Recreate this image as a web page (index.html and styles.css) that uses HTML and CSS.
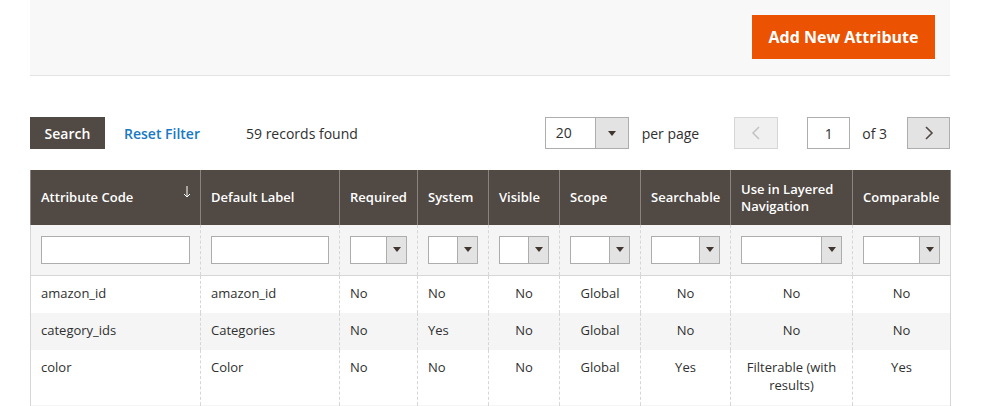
FILE: index.html
```html
<!DOCTYPE html>
<html lang="en">
<head>
    <meta charset="UTF-8">
    <title>Product Attributes</title>
    <link rel="stylesheet" href="styles.css">
</head>
<body>
    <div class="page">
        <!-- Barra de ações da página -->
        <div class="page-actions">
            <button class="btn-primary">Add New Attribute</button>
        </div>

        <!-- Toolbar da grid -->
        <div class="grid-toolbar">
            <div class="toolbar-left">
                <button class="btn-search">Search</button>
                <a class="reset-link" href="#">Reset Filter</a>
                <span class="records">59 records found</span>
            </div>
            <div class="toolbar-right">
                <div class="select select-limit">
                    <span class="select-value">20</span>
                    <span class="select-arrow"><i class="caret"></i></span>
                </div>
                <span class="per-page">per page</span>
                <button class="pager-btn pager-prev" disabled>
                    <svg width="10" height="14" viewBox="0 0 10 14"><polyline points="8,1 2,7 8,13" fill="none" stroke="#c2c2c2" stroke-width="1.5"/></svg>
                </button>
                <input class="page-input" type="text" value="1">
                <span class="pages-total">of 3</span>
                <button class="pager-btn pager-next">
                    <svg width="10" height="14" viewBox="0 0 10 14"><polyline points="2,1 8,7 2,13" fill="none" stroke="#514943" stroke-width="1.6"/></svg>
                </button>
            </div>
        </div>

        <!-- Grid de atributos -->
        <table class="grid">
            <colgroup>
                <col style="width:170px">
                <col style="width:139px">
                <col style="width:78px">
                <col style="width:71px">
                <col style="width:71px">
                <col style="width:81px">
                <col style="width:90px">
                <col style="width:122px">
                <col style="width:98px">
            </colgroup>
            <thead>
                <tr class="headings">
                    <th class="sorted">Attribute Code
                        <svg class="sort-icon" width="8" height="12" viewBox="0 0 8 12"><line x1="4" y1="0" x2="4" y2="11" stroke="#fff" stroke-width="1"/><polyline points="1,8 4,11 7,8" fill="none" stroke="#fff" stroke-width="1"/></svg>
                    </th>
                    <th>Default Label</th>
                    <th>Required</th>
                    <th>System</th>
                    <th>Visible</th>
                    <th>Scope</th>
                    <th>Searchable</th>
                    <th>Use in Layered Navigation</th>
                    <th>Comparable</th>
                </tr>
                <tr class="filters">
                    <td><input class="filter-input" type="text"></td>
                    <td><input class="filter-input" type="text"></td>
                    <td><div class="select"><span class="select-value"></span><span class="select-arrow small"><i class="caret"></i></span></div></td>
                    <td><div class="select"><span class="select-value"></span><span class="select-arrow small"><i class="caret"></i></span></div></td>
                    <td><div class="select"><span class="select-value"></span><span class="select-arrow small"><i class="caret"></i></span></div></td>
                    <td><div class="select"><span class="select-value"></span><span class="select-arrow small"><i class="caret"></i></span></div></td>
                    <td><div class="select"><span class="select-value"></span><span class="select-arrow small"><i class="caret"></i></span></div></td>
                    <td><div class="select"><span class="select-value"></span><span class="select-arrow small"><i class="caret"></i></span></div></td>
                    <td><div class="select"><span class="select-value"></span><span class="select-arrow small"><i class="caret"></i></span></div></td>
                </tr>
            </thead>
            <tbody>
                <tr>
                    <td>amazon_id</td>
                    <td>amazon_id</td>
                    <td>No</td>
                    <td>No</td>
                    <td class="center">No</td>
                    <td class="center">Global</td>
                    <td class="center">No</td>
                    <td class="center">No</td>
                    <td class="center">No</td>
                </tr>
                <tr class="even">
                    <td>category_ids</td>
                    <td>Categories</td>
                    <td>No</td>
                    <td>Yes</td>
                    <td class="center">No</td>
                    <td class="center">Global</td>
                    <td class="center">No</td>
                    <td class="center">No</td>
                    <td class="center">No</td>
                </tr>
                <tr>
                    <td>color</td>
                    <td>Color</td>
                    <td>No</td>
                    <td>No</td>
                    <td class="center">No</td>
                    <td class="center">Global</td>
                    <td class="center">Yes</td>
                    <td class="center">Filterable (with results)</td>
                    <td class="center">Yes</td>
                </tr>
                <tr class="even next-row">
                    <td></td><td></td><td></td><td></td><td></td><td></td><td></td><td></td><td></td>
                </tr>
            </tbody>
        </table>
    </div>
</body>
</html>
```

FILE: styles.css
```css
html, body {
    margin: 0;
    padding: 0;
    overflow: hidden;
    background: #fff;
}
body {
    font-family: 'Open Sans', 'Liberation Sans', sans-serif;
    color: #303030;
    font-size: 14px;
}
.page {
    width: 920px;
    margin-left: 30px;
}
.page-actions {
    background: #f8f8f8;
    border-bottom: 1px solid #e3e3e3;
    height: 76px;
    padding: 15px 15px 0 0;
    box-sizing: border-box;
    display: flex;
    justify-content: flex-end;
    align-items: flex-start;
}
.btn-primary {
    background: #eb5202;
    border: 1px solid #eb5202;
    color: #fff;
    font-family: inherit;
    font-size: 16px;
    font-weight: 700;
    height: 44px;
    width: 183px;
    padding: 0;
    cursor: pointer;
}

/* toolbar */
.grid-toolbar {
    display: flex;
    justify-content: space-between;
    align-items: center;
    margin-top: 41px;
    height: 32px;
}
.toolbar-left, .toolbar-right {
    display: flex;
    align-items: center;
}
.btn-search {
    background: #514943;
    border: none;
    color: #fff;
    font-family: inherit;
    font-size: 14px;
    font-weight: 600;
    width: 75px;
    height: 32px;
    padding: 0;
}
.reset-link {
    color: #1979c3;
    text-decoration: none;
    font-weight: 600;
    margin-left: 19px;
}
.records {
    margin-left: 46px;
}
.select {
    display: flex;
    height: 28px;
    border: 1px solid #adadad;
    background: #fff;
    box-sizing: border-box;
}
.select-value {
    flex: 1;
    padding-left: 10px;
    line-height: 29px;
}
.select-arrow {
    width: 32px;
    background: #e3e3e3;
    border-left: 1px solid #adadad;
    display: flex;
    align-items: center;
    justify-content: center;
}
.select-arrow.small {
    width: 19px;
}
.caret {
    width: 0;
    height: 0;
    border-left: 4px solid transparent;
    border-right: 4px solid transparent;
    border-top: 5px solid #41362f;
}
.select-limit {
    width: 84px;
    height: 32px;
}
.per-page {
    margin-left: 13px;
}
.pager-btn {
    height: 32px;
    padding: 0;
    display: flex;
    align-items: center;
    justify-content: center;
    box-sizing: border-box;
}
.pager-prev {
    width: 44px;
    margin-left: 35px;
    background: #f0f0f0;
    border: 1px solid #d6d6d6;
}
.pager-next {
    width: 43px;
    margin-left: 20px;
    background: #e3e3e3;
    border: 1px solid #adadad;
}
.page-input {
    width: 43px;
    height: 32px;
    box-sizing: border-box;
    border: 1px solid #adadad;
    margin-left: 29px;
    text-align: center;
    font-family: inherit;
    font-size: 14px;
    color: #303030;
    padding: 0;
}
.pages-total {
    margin-left: 12px;
}

/* grid */
.grid {
    width: 920px;
    table-layout: fixed;
    border-collapse: collapse;
    margin-top: 21px;
    font-size: 13px;
}
.grid th {
    background: #514943;
    color: #fff;
    font-weight: 600;
    text-align: left;
    padding: 10px 10px;
    line-height: 17px;
    height: 55px;
    box-sizing: border-box;
    border-left: 1px solid #8a837f;
    border-right: 1px solid #8a837f;
    vertical-align: middle;
}
.grid th.sorted {
    position: relative;
}
.sort-icon {
    position: absolute;
    right: 9px;
    top: 16px;
}
.grid td {
    padding: 8px 10px 11px 10px;
    line-height: 18px;
    vertical-align: top;
    border-left: 1px dashed #d6d6d6;
    border-right: 1px dashed #d6d6d6;
}
.grid td:first-child {
    border-left: 1px solid #d6d6d6;
}
.grid td:last-child {
    border-right: 1px solid #d6d6d6;
}
.grid .filters td {
    background: #f5f5f5;
    padding: 10px;
    height: 50px;
    box-sizing: border-box;
    vertical-align: middle;
    border-bottom: 1px solid #d6d6d6;
}
.filter-input {
    width: 100%;
    height: 28px;
    box-sizing: border-box;
    border: 1px solid #adadad;
    display: block;
}
.grid tbody tr.even td {
    background: #f5f5f5;
}
.grid .next-row td {
    height: 37px;
}
.grid td.center {
    text-align: center;
}
```
